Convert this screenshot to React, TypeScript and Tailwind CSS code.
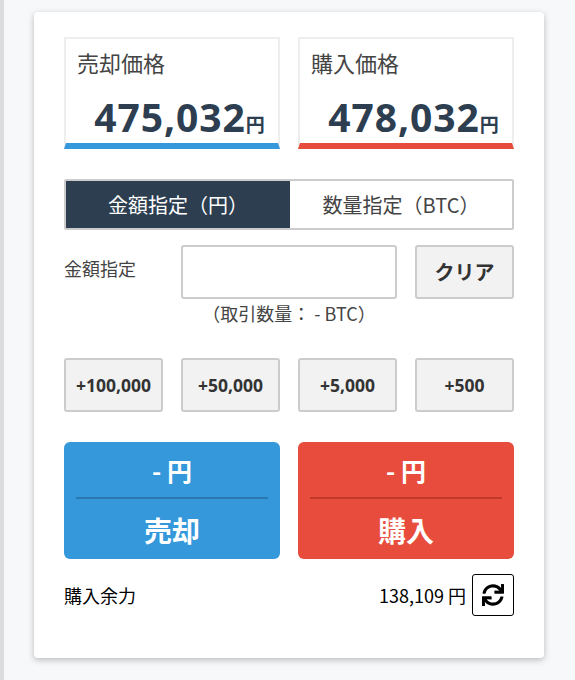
import { FaSync } from 'react-icons/fa';

const jp = '[font-family:"Noto_Sans_CJK_JP",sans-serif]';
const num = '[font-family:"Noto_Sans","Noto_Sans_CJK_JP",sans-serif]';

function PriceBox({ label, price, bar }: { label: string; price: string; bar: string }) {
  return (
    <div className={`h-[112px] border-2 border-b-[6px] border-[#eeeeee] ${bar} pl-[11px] pt-[5px]`}>
      <div className="text-[22px] leading-[36px] text-[#444]">{label}</div>
      <div className="mt-[11px] flex items-baseline justify-center pl-[4px] text-[#2c3e50]">
        <span className={`${num} text-[39px] leading-[52px] font-bold tracking-[0.9px]`}>{price}</span>
        <span className="text-[19px] font-bold">円</span>
      </div>
    </div>
  );
}

function TradeButton({ label, bg, line }: { label: string; bg: string; line: string }) {
  return (
    <button className={`flex h-[117px] flex-col items-stretch rounded-[6px] px-[12px] text-white ${bg}`}>
      <span className="block h-[55px] pt-[6px] text-[25px] leading-[44px] font-bold">- 円</span>
      <span className={`block border-t-2 ${line} pt-[10px] text-[28px] leading-[42px] font-bold`}>{label}</span>
    </button>
  );
}

export default function App() {
  const amounts = ['+100,000', '+50,000', '+5,000', '+500'];

  return (
    <div className={`flex min-h-screen bg-[#f7f8fa] ${jp}`}>
      <div className="w-[4px] shrink-0 bg-[#dcdcdc]" />
      <div className="ml-[30px] mt-[12px] h-[646px] w-[510px] rounded-[4px] bg-white px-[30px] pt-[25px] shadow-[0_2px_6px_rgba(0,0,0,0.25)]">
        <div className="grid grid-cols-2 gap-[18px]">
          <PriceBox label="売却価格" price="475,032" bar="border-b-[#3498db]" />
          <PriceBox label="購入価格" price="478,032" bar="border-b-[#e74c3c]" />
        </div>

        {/* Tabs */}
        <div className="mt-[30px] flex h-[51px] rounded-[2px] border-2 border-[#cccccc] text-[20px]">
          <div className="flex w-[224px] items-center justify-center bg-[#2c3e50] text-white">金額指定（円）</div>
          <div className="flex flex-1 items-center justify-center text-[#444]">数量指定（BTC）</div>
        </div>

        {/* Amount input */}
        <div className="mt-[15px] grid grid-cols-[99px_216px_99px] gap-x-[18px]">
          <div className="pt-[7px] text-[18px] leading-[32px] text-[#444]">金額指定</div>
          <input className="h-[54px] rounded-[3px] border-2 border-[#cccccc] bg-white" />
          <button className="h-[54px] rounded-[3px] border-2 border-[#cccccc] bg-[#f2f2f2] text-[20px] font-bold text-[#333]">クリア</button>
          <div className="col-start-2 h-[28px] text-center text-[18px] leading-[28px] text-[#444]">（取引数量： - BTC）</div>
        </div>

        <div className="mt-[31px] grid grid-cols-4 gap-[18px]">
          {amounts.map((a) => (
            <button key={a} className={`${num} h-[54px] rounded-[3px] border-2 border-[#cccccc] bg-[#f2f2f2] text-[17.5px] font-bold text-[#333]`}>
              {a}
            </button>
          ))}
        </div>

        <div className="mt-[30px] grid grid-cols-2 gap-[18px]">
          <TradeButton label="売却" bg="bg-[#3498db]" line="border-[#2a78ae]" />
          <TradeButton label="購入" bg="bg-[#e74c3c]" line="border-[#c0392b]" />
        </div>

        {/* Balance */}
        <div className="mt-[15px] flex h-[42px] items-center text-[18px] text-black">
          <span>購入余力</span>
          <span className="ml-auto mr-[6px]">138,109 円</span>
          <button className="flex h-[42px] w-[42px] items-center justify-center rounded-[3px] border-[1.5px] border-black bg-white">
            <FaSync size={22} />
          </button>
        </div>
      </div>
    </div>
  );
}
